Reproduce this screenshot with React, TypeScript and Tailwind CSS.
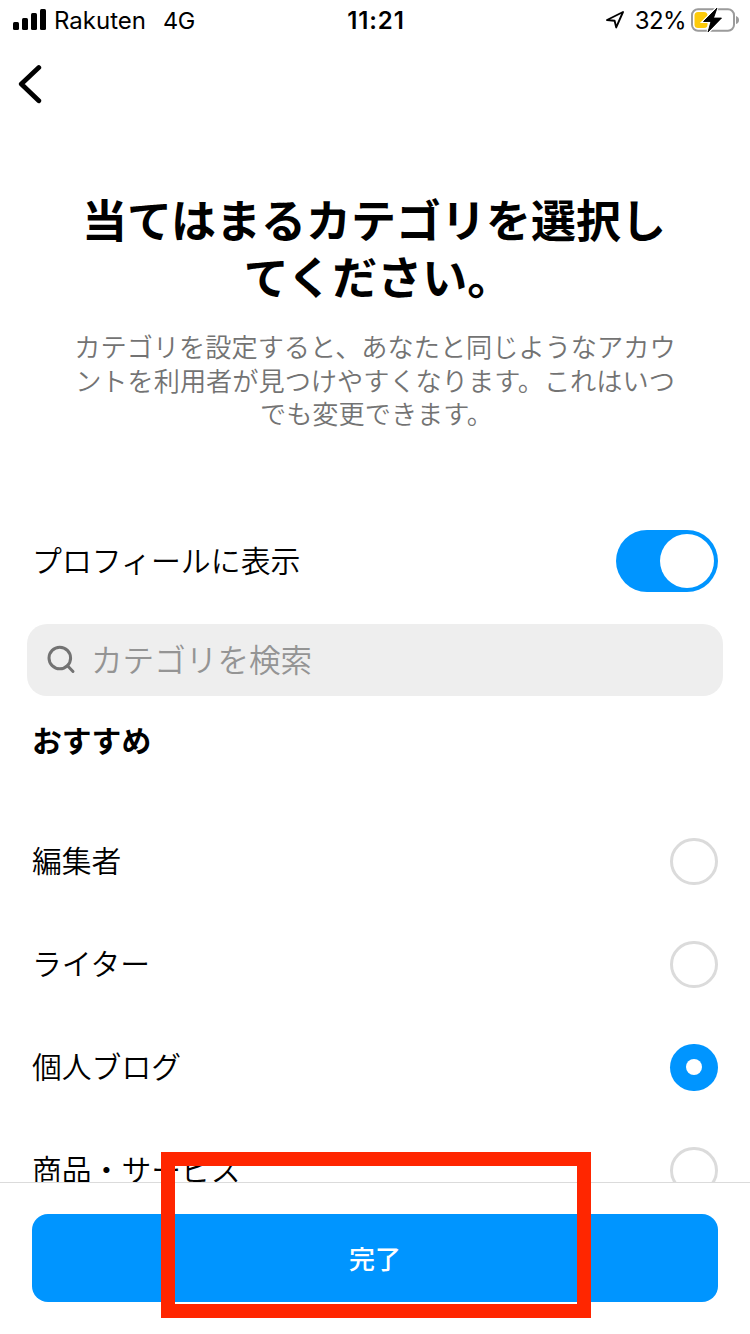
const categories = [
  { name: "編集者", selected: false },
  { name: "ライター", selected: false },
  { name: "個人ブログ", selected: true },
  { name: "商品・サービス", selected: false },
];

function StatusBar() {
  return (
    <div className="grid grid-cols-3 items-center h-10 shrink-0 pl-[13px] pr-[11px] font-['Inter','Liberation_Sans',sans-serif] font-normal text-black">
      <div className="flex items-center">
        <svg width="34" height="22" viewBox="0 0 34 22" className="shrink-0">
          <rect x="0" y="13" width="6" height="8" rx="1.5" />
          <rect x="9" y="9" width="6" height="12" rx="1.5" />
          <rect x="18" y="4" width="6" height="17" rx="1.5" />
          <rect x="27" y="0" width="6" height="21" rx="1.5" />
        </svg>
        <span className="ml-[7px] pt-px text-[24px] leading-[39px]">Rakuten</span>
        <span className="ml-[17px] pt-px text-[23.5px] leading-[39px] tracking-[-0.3px]">4G</span>
      </div>
      <div className="pt-px text-center text-[24px] leading-[39px] font-semibold tracking-[0.9px]">11:21</div>
      <div className="flex items-center justify-end">
        <svg width="20" height="20" viewBox="0 0 20 20" className="shrink-0" fill="none" stroke="black" strokeWidth="1.9" strokeLinejoin="round">
          <path d="M18 2 L11.2 17.4 L9.6 10.8 L2 10 Z" />
        </svg>
        <span className="ml-[10px] pt-px text-[24px] leading-[39px] tracking-[-0.6px] whitespace-nowrap">32%</span>
        <svg width="48" height="26" viewBox="0 0 48 26" className="ml-[5px] shrink-0">
          <rect x="1" y="2.2" width="42" height="21.6" rx="6" fill="none" stroke="#9b9b9b" strokeWidth="2" />
          <rect x="3.5" y="5" width="13" height="16" rx="3.5" fill="#fdca0a" />
          <path d="M45 9 Q48 10 48 13 Q48 16 45 17 Z" fill="#9b9b9b" />
          <path d="M26 1 L12.5 14.5 L20 14.5 L17 25 L30.5 11 L22.5 11 Z" fill="black" stroke="white" strokeWidth="3" paintOrder="stroke" />
          <path d="M26 1 L12.5 14.5 L20 14.5 L17 25 L30.5 11 L22.5 11 Z" fill="black" stroke="black" strokeWidth="0.8" />
        </svg>
      </div>
    </div>
  );
}

function Radio({ selected }: { selected: boolean }) {
  if (selected) {
    return (
      <span className="flex items-center justify-center w-12 h-[47px] rounded-full bg-[#0095ff]">
        <span className="w-4 h-4 rounded-full bg-white"></span>
      </span>
    );
  }
  return <span className="w-12 h-[47px] rounded-full border-[3px] border-[#dbdbdb]"></span>;
}

export default function App() {
  return (
    <div className="relative flex flex-col w-[750px] h-[1334px] overflow-hidden bg-white text-black font-['Noto_Sans_CJK_JP',sans-serif] font-[350]">
      <StatusBar />

      <header className="h-[150px] shrink-0 pt-6 pl-[17px]">
        <button aria-label="戻る" className="block">
          <svg width="26" height="40" viewBox="0 0 26 40" fill="none" stroke="black" strokeWidth="4.8" strokeLinecap="round" strokeLinejoin="round">
            <path d="M21.8 3.6 L4.3 20 L21.8 36.8" />
          </svg>
        </button>
      </header>

      <section className="shrink-0 text-center">
        <h1 className="text-[45px] leading-[57px] font-bold whitespace-nowrap">
          <span className="pr-[2px]">当てはまるカテゴリを選択し</span><br />
          <span className="pl-[6px]">てください。</span>
        </h1>
        <p className="mt-[26px] text-[26.2px] leading-[33.5px] text-[#737373] whitespace-nowrap">
          カテゴリを設定すると、あなたと同じようなアカウ<br />
          ントを利用者が見つけやすくなります。これはいつ<br />
          <span className="pl-[3px]">でも変更できます。</span>
        </p>
      </section>

      <div className="flex items-center justify-between h-[62px] shrink-0 mt-[99px] px-8">
        <span className="pb-1 text-[29.9px] leading-[56px]">プロフィールに表示</span>
        <button role="switch" aria-checked="true" aria-label="プロフィールに表示" className="flex items-center justify-end w-[102px] h-[62px] rounded-full bg-[#0095ff] pr-1">
          <span className="w-[54px] h-[54px] rounded-full bg-white"></span>
        </button>
      </div>

      <div className="flex items-center h-[72px] shrink-0 mt-8 mx-[27px] rounded-[20px] bg-[#eeeeee] pl-5">
        <svg width="29" height="29" viewBox="0 0 29 29" fill="none" stroke="#737373" strokeWidth="3" strokeLinecap="round">
          <circle cx="12.8" cy="13" r="10.8" />
          <path d="M20.5 20.8 L26 26.5" />
        </svg>
        <span className="ml-[15px] pb-1 text-[31.6px] leading-[64px] text-[#949494]">カテゴリを検索</span>
      </div>

      <h2 className="shrink-0 mt-[21px] pl-8 text-[29.8px] leading-[44px] font-bold">おすすめ</h2>

      <ul className="flex-1 min-h-0 mt-[49px] px-8 overflow-hidden">
        {categories.map((category) => (
          <li key={category.name} className="flex items-center justify-between h-[103px]">
            <span className="pb-1 text-[29.8px] leading-[56px]">{category.name}</span>
            <Radio selected={category.selected} />
          </li>
        ))}
      </ul>

      <footer className="h-[152px] shrink-0 border-t border-[#dbdbdb] bg-white px-8 pt-[31px]">
        <button className="w-full h-[88px] rounded-2xl bg-[#0095ff] pb-0.5 text-[26px] font-medium text-white">完了</button>
      </footer>

      {/* Highlight around the done button */}
      <div className="absolute left-[161px] top-[1152px] w-[430px] h-[166px] border-[14px] border-[#ff2600] pointer-events-none"></div>
    </div>
  );
}
